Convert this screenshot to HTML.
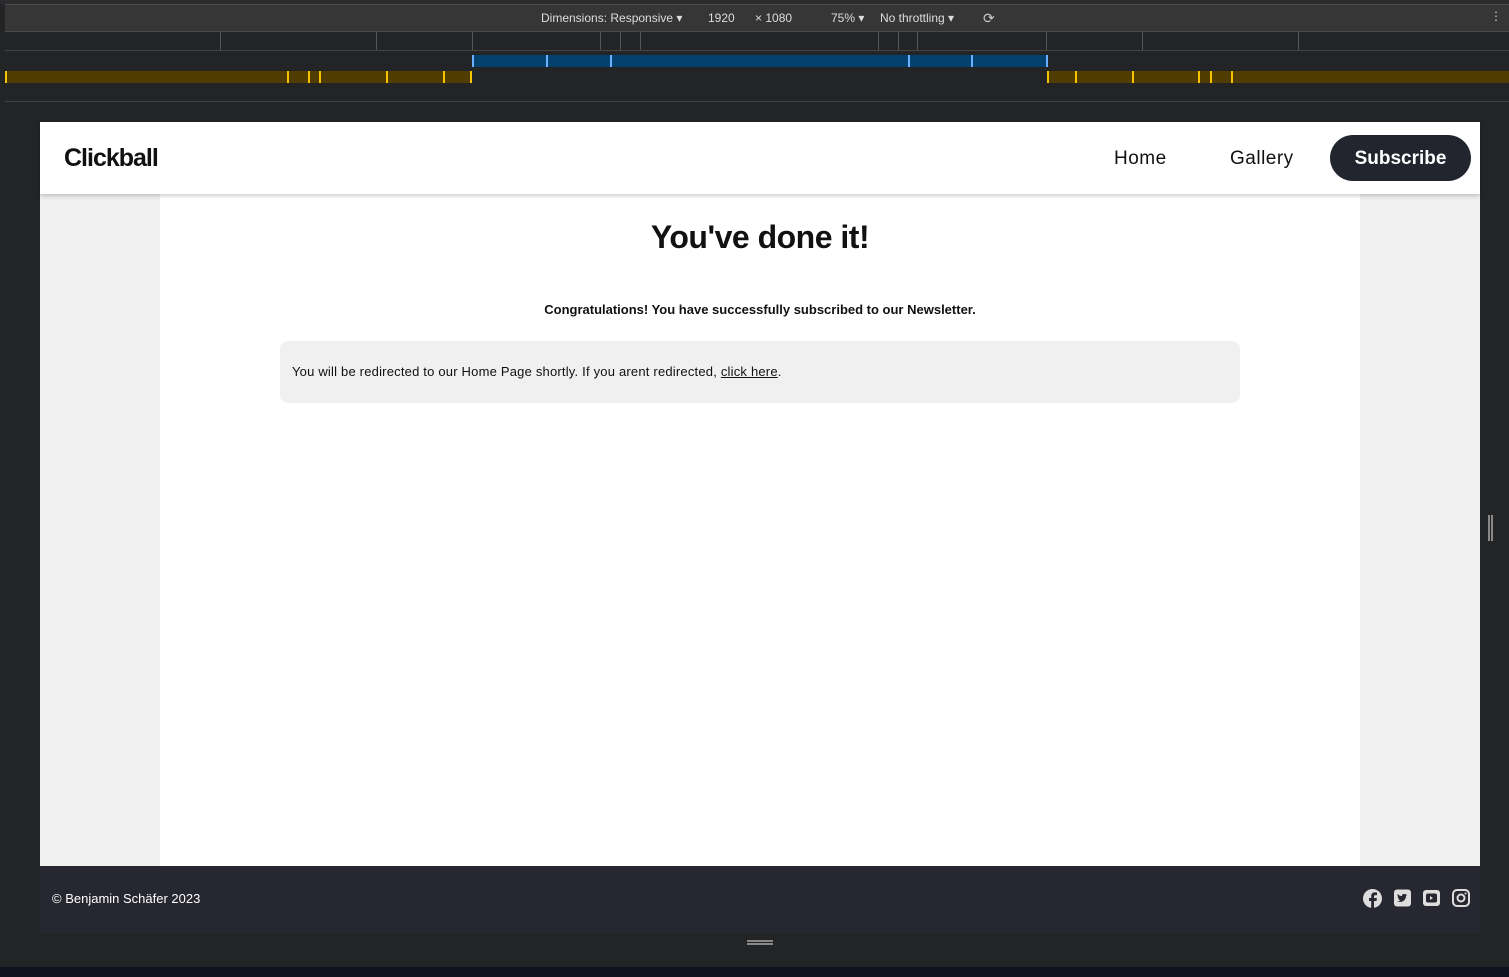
<!DOCTYPE html>
<html><head><meta charset="utf-8"><style>
*{margin:0;padding:0;box-sizing:border-box}
body{width:1509px;height:977px;background:#232425;font-family:"Liberation Sans",sans-serif;position:relative;overflow:hidden}
.abs{position:absolute}
.t{position:absolute;top:32px;width:1px;height:18px;background:#555}
.y{position:absolute;top:71px;width:2px;height:12px;background:#f5c400}
.b{position:absolute;top:55px;width:2px;height:12px;background:#6ab0ff}
</style></head><body>
<div class="abs" style="left:0;top:0;width:1509px;height:4px;background:#2b2b2e"></div>
<div class="abs" style="left:5px;top:4px;width:1504px;height:28px;background:#363636;border-top:1px solid #4a4a4a;border-bottom:1px solid #4a4a4a"></div>
<div class="abs" style="left:541px;top:11px;color:#ddd;font-size:12px">Dimensions: Responsive ▾</div>
<div class="abs" style="left:708px;top:11px;color:#ddd;font-size:12px">1920</div>
<div class="abs" style="left:755px;top:11px;color:#ddd;font-size:12px">× 1080</div>
<div class="abs" style="left:831px;top:11px;color:#ddd;font-size:12px">75% ▾</div>
<div class="abs" style="left:880px;top:11px;color:#ddd;font-size:12px">No throttling ▾</div>
<div class="abs" style="left:983px;top:10px;color:#ccc;font-size:14px">⟳</div>
<div class="abs" style="left:1490px;top:9px;color:#ccc;font-size:12px">⋮</div>
<div class="t" style="left:220px"></div><div class="t" style="left:376px"></div><div class="t" style="left:472px"></div><div class="t" style="left:600px"></div><div class="t" style="left:620px"></div><div class="t" style="left:640px"></div><div class="t" style="left:878px"></div><div class="t" style="left:898px"></div><div class="t" style="left:917px"></div><div class="t" style="left:1046px"></div><div class="t" style="left:1142px"></div><div class="t" style="left:1298px"></div>
<div class="abs" style="left:5px;top:50px;width:1504px;height:1px;background:#444"></div>
<div class="abs" style="left:472px;top:55px;width:576px;height:12px;background:#04406d;border-left:2px solid #6ab0ff;border-right:2px solid #6ab0ff"></div>
<div class="b" style="left:546px"></div><div class="b" style="left:610px"></div><div class="b" style="left:908px"></div><div class="b" style="left:971px"></div>
<div class="abs" style="left:5px;top:71px;width:466px;height:12px;background:#513c00"></div>
<div class="abs" style="left:1047px;top:71px;width:462px;height:12px;background:#513c00"></div>
<div class="y" style="left:5px"></div><div class="y" style="left:287px"></div><div class="y" style="left:308px"></div><div class="y" style="left:319px"></div><div class="y" style="left:386px"></div><div class="y" style="left:443px"></div><div class="y" style="left:470px"></div><div class="y" style="left:1047px"></div><div class="y" style="left:1075px"></div><div class="y" style="left:1132px"></div><div class="y" style="left:1198px"></div><div class="y" style="left:1210px"></div><div class="y" style="left:1231px"></div>
<div class="abs" style="left:5px;top:101px;width:1504px;height:1px;background:#444"></div>
<div class="abs" style="left:0;top:967px;width:1509px;height:10px;background:#0d1420"></div>
<div class="abs" style="left:747px;top:940px;width:26px;height:5px;border-top:2px solid #888;border-bottom:2px solid #888"></div>
<div class="abs" style="left:1488px;top:515px;width:5px;height:26px;border-left:2px solid #888;border-right:2px solid #888"></div>

<div class="abs" style="left:40px;top:122px;width:1440px;height:744px;background:#f0f0f0"></div>
<div class="abs" style="left:160px;top:194px;width:1200px;height:672px;background:#fff"></div>
<div class="abs" style="left:40px;top:122px;width:1440px;height:72px;background:#fff;box-shadow:0 2px 4px rgba(0,0,0,.2)"></div>
<div class="abs" style="left:64px;top:144px;font-size:25px;font-weight:bold;letter-spacing:-1px;color:#111">Clickball</div>
<div class="abs" style="left:1114px;top:148px;font-size:19px;letter-spacing:0.5px;color:#111">Home</div>
<div class="abs" style="left:1230px;top:148px;font-size:19px;letter-spacing:0.5px;color:#111">Gallery</div>
<div class="abs" style="left:1330px;top:135px;width:141px;height:46px;border-radius:23px;background:#23252e;color:#fff;font-size:19px;font-weight:bold;text-align:center;line-height:47px">Subscribe</div>
<div class="abs" style="left:160px;top:219px;width:1200px;text-align:center;font-size:32px;font-weight:bold;letter-spacing:-0.5px;color:#111">You've done it!</div>
<div class="abs" style="left:160px;top:302px;width:1200px;text-align:center;font-size:13px;font-weight:bold;color:#111">Congratulations! You have successfully subscribed to our Newsletter.</div>
<div class="abs" style="left:280px;top:341px;width:960px;height:62px;border-radius:8px;background:#f0f0f0;padding:0 12px;line-height:62px;font-size:13px;letter-spacing:0.2px;color:#111">You will be redirected to our Home Page shortly. If you arent redirected, <u>click here</u>.</div>
<div class="abs" style="left:40px;top:866px;width:1440px;height:67px;background:#262730"></div>
<div class="abs" style="left:52px;top:891px;font-size:13px;color:#fff">© Benjamin Schäfer 2023</div>
<svg class="abs" style="left:1362px;top:888px" width="110" height="20" viewBox="0 0 110 20">
<circle cx="10.5" cy="10.5" r="9.5" fill="#ddd"/><path d="M12 20v-7h2.5l.4-3H12V8.5c0-.9.3-1.4 1.5-1.4H15V4.5c-.3 0-1.2-.1-2.2-.1-2.2 0-3.6 1.3-3.6 3.7V10H7v3h2.2v7z" fill="#262730"/>
<rect x="32" y="1.5" width="17" height="17" rx="3" fill="#ddd"/><path d="M35 13c2 1.3 5 1.3 7-.5 1.5-1.4 2-3 2-4.5l1.2-1.2-1.4.3.9-1.2-1.5.5c-1.2-1.2-3.3-.4-3.2 1.6-2 0-3.2-.8-4.3-2-.6 1.2 0 2.5.8 3l-.8-.2c0 1 .7 1.8 1.6 2h-.9c.3.9 1.2 1.4 2 1.5-.9.7-2.2 1-3.4.7z" fill="#262730"/>
<rect x="61" y="2" width="17" height="16" rx="3" fill="#ddd"/><rect x="64" y="5.5" width="11" height="9" rx="2" fill="#262730"/><path d="M68 8v4l3-2z" fill="#ddd"/>
<rect x="91" y="2" width="16" height="16" rx="4" fill="none" stroke="#ddd" stroke-width="2"/><circle cx="99" cy="10" r="3.5" fill="none" stroke="#ddd" stroke-width="2"/><circle cx="103.5" cy="5.5" r="1" fill="#ddd"/>
</svg>
</body></html>
